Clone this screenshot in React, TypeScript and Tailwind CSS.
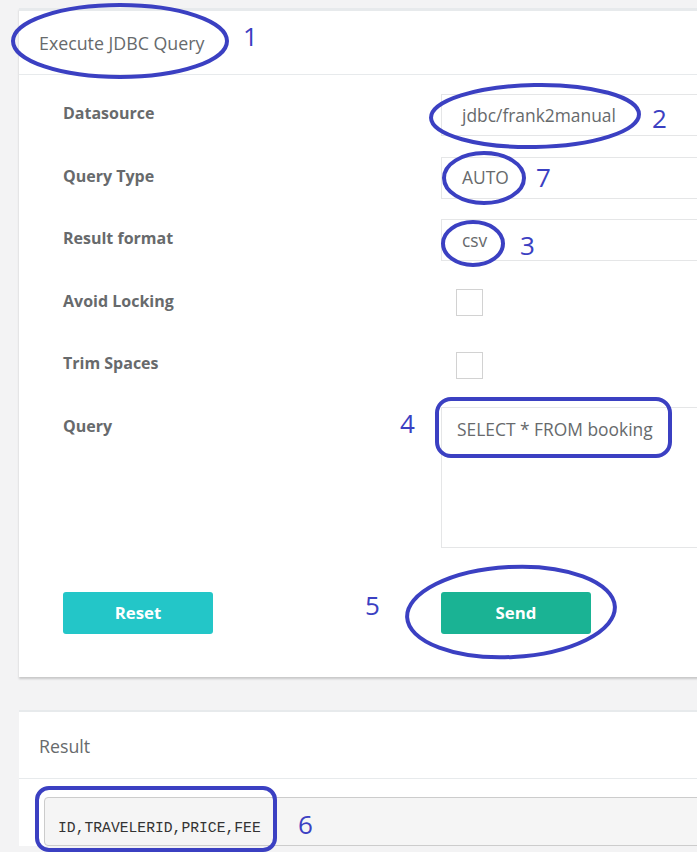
import React from 'react'

const font = { fontFamily: '"Open Sans", "Noto Sans", sans-serif' }

interface RowProps {
  label: string
  children: React.ReactNode
}

const FormRow: React.FC<RowProps> = ({ label, children }) => (
  <div className="grid grid-cols-[378px_1fr]">
    <div className="pt-[9px] text-[16px] leading-[20px] font-bold text-[#676a6c]">{label}</div>
    <div>{children}</div>
  </div>
)

const SelectBox: React.FC<{ value: string }> = ({ value }) => (
  <div className="h-[42px] border border-[#e5e6e7] bg-white pl-[20px] flex items-center text-[17.4px] text-[#676a6c]">
    {value}
  </div>
)

const Checkbox: React.FC = () => (
  <div className="h-[42px] flex items-center pl-[15px]">
    <input
      type="checkbox"
      className="appearance-none w-[27px] h-[27px] border border-[#d2d2d2] bg-white rounded-none"
    />
  </div>
)

// annotation marks drawn over the screenshot
const Annotations: React.FC = () => (
  <svg
    className="absolute left-0 top-0 pointer-events-none"
    width={697}
    height={852}
    viewBox="0 0 697 852"
  >
    <g fill="none" stroke="#3b40c2" strokeWidth={4}>
      <ellipse cx={120} cy={41} rx={107} ry={36} />
      <ellipse cx={535} cy={116} rx={104} ry={31} transform="rotate(-1 535 116)" />
      <ellipse cx={484} cy={178} rx={40} ry={25} />
      <ellipse cx={473} cy={243.5} rx={30} ry={21.5} />
      <rect x={437} y={399} width={233} height={57} rx={14} />
      <ellipse cx={511} cy={612} rx={104} ry={45} transform="rotate(-3 511 612)" />
      <rect x={37} y={788} width={238} height={62} rx={12} />
    </g>
    <g fill="#3b40c2" style={{ fontFamily: '"Open Sans", sans-serif', fontSize: 26 }}>
      <text x={243} y={46}>1</text>
      <text x={652} y={128}>2</text>
      <text x={536} y={187}>7</text>
      <text x={520} y={255}>3</text>
      <text x={400} y={433}>4</text>
      <text x={365} y={615}>5</text>
      <text x={298} y={834}>6</text>
    </g>
  </svg>
)

export default function App() {
  return (
    <div className="relative w-[697px] h-[852px] overflow-hidden bg-[#f3f3f4] pt-[8px] pl-[19px]" style={font}>
      {/* Execute JDBC Query */}
      <div className="w-[760px] bg-white border-t-[3px] border-[#e7eaec] shadow-[0_2px_2px_rgba(0,0,0,0.18)]">
        <div className="h-[64px] flex items-center pt-[2px] px-[20px] border-b border-[#e7eaec]">
          <h5 className="text-[17.8px] text-[#676a6c]">Execute JDBC Query</h5>
        </div>
        <div className="pt-[19px] pb-[43px] pl-[44px] pr-[20px]">
          <div className="flex flex-col gap-[20.5px]">
            <FormRow label="Datasource">
              <SelectBox value="jdbc/frank2manual" />
            </FormRow>
            <FormRow label="Query Type">
              <SelectBox value="AUTO" />
            </FormRow>
            <FormRow label="Result format">
              <SelectBox value="csv" />
            </FormRow>
            <FormRow label="Avoid Locking">
              <Checkbox />
            </FormRow>
            <FormRow label="Trim Spaces">
              <Checkbox />
            </FormRow>
            <FormRow label="Query">
              <textarea
                className="block w-full h-[141px] border border-[#e5e6e7] resize-none px-[15px] pt-[9px] text-[17.4px] leading-[24px] text-[#676a6c] outline-none"
                style={font}
                defaultValue="SELECT * FROM booking"
              />
            </FormRow>
          </div>
          <div className="grid grid-cols-[378px_1fr] mt-[44.5px]">
            <div>
              <button className="w-[150px] h-[42px] rounded-[3px] bg-[#23c6c8] text-white font-bold text-[16.8px]">
                Reset
              </button>
            </div>
            <div>
              <button className="w-[150px] h-[42px] rounded-[3px] bg-[#1ab394] text-white font-bold text-[16.8px]">
                Send
              </button>
            </div>
          </div>
        </div>
      </div>

      {/* Result */}
      <div className="w-[760px] mt-[33px] bg-white border-t-[2px] border-[#e7eaec]">
        <div className="h-[67px] flex items-center pt-[2px] px-[20px] border-b border-[#e7eaec]">
          <h5 className="text-[17.8px] text-[#676a6c]">Result</h5>
        </div>
        <div className="pt-[18px] pl-[25px] pr-[20px]">
          <pre
            className="border border-[#cccccc] bg-[#f5f5f5] rounded-[4px] pl-[13px] pt-[21px] pb-[8px] text-[14.7px] leading-[18px] text-[#333333]"
            style={{ fontFamily: '"Liberation Mono", "DejaVu Sans Mono", monospace' }}
          >
            ID,TRAVELERID,PRICE,FEE
          </pre>
        </div>
      </div>

      <Annotations />
    </div>
  )
}
